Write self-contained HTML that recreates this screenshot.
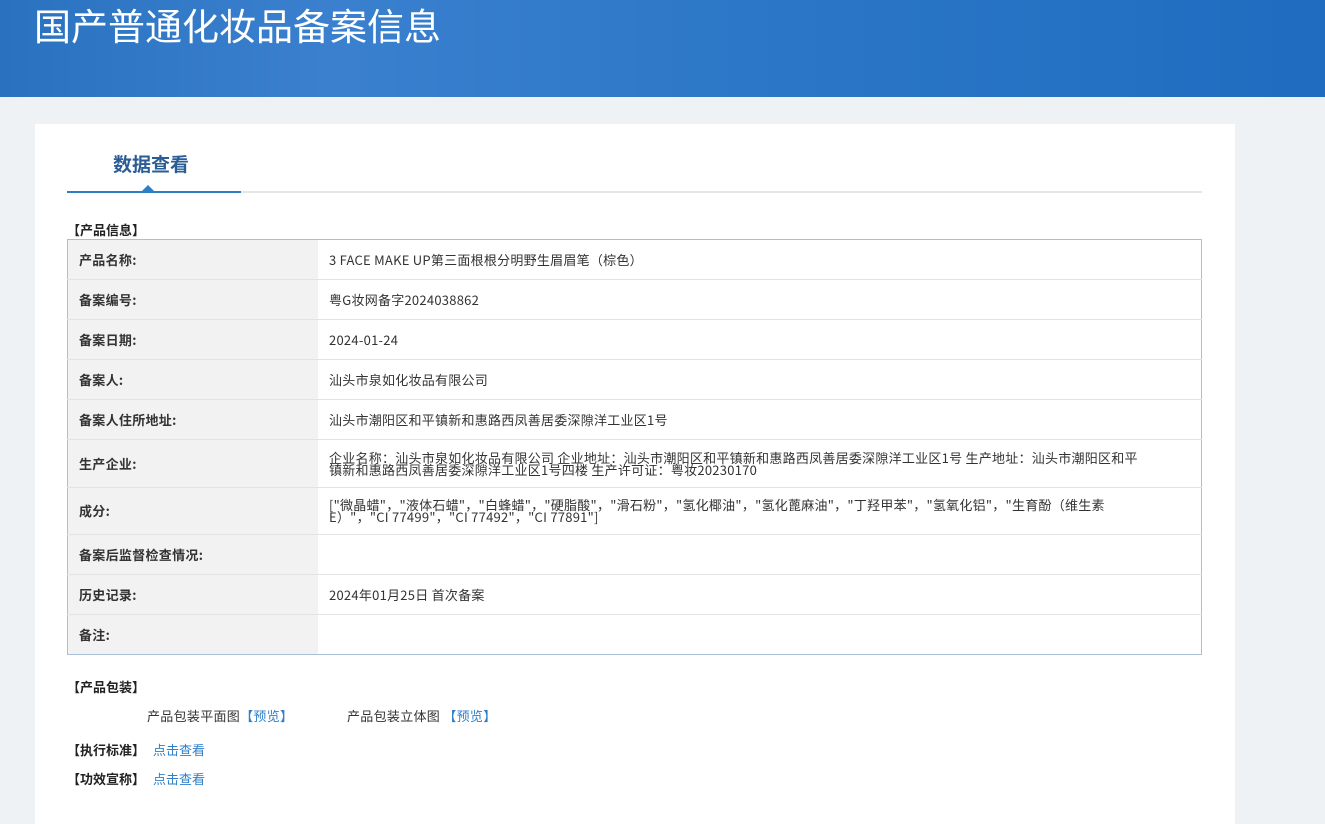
<!DOCTYPE html>
<html><head><meta charset="utf-8"><style>
body{margin:0;width:1325px;height:813px;overflow:hidden;background:#eef2f5;font-family:"Liberation Sans","Microsoft YaHei","Noto Sans CJK SC",sans-serif;color:#333;position:relative}
.hd{position:absolute;left:0;top:0;width:1325px;height:97px;background:linear-gradient(90deg,#2a72c0 0%,#3a80cf 25%,#2b76c6 60%,#1f6cc0 100%)}
.hd h1{position:absolute;left:34px;top:2px;margin:0;font-size:37px;font-weight:normal;color:#fff;line-height:44px;font-family:"Noto Sans CJK SC",sans-serif}
.card{position:absolute;left:35px;top:124px;width:1200px;height:700px;background:#fff}
.tab{position:absolute;left:113px;top:150px;font-size:19px;font-weight:bold;color:#2a5d96;font-family:"Noto Sans CJK SC",sans-serif}
.line{position:absolute;left:67px;top:191px;width:1135px;height:2px;background:#e6e6e6}
.line2{position:absolute;left:67px;top:191px;width:174px;height:2px;background:#2f7fc8}
.tri{position:absolute;left:142px;top:185px;width:0;height:0;border-left:6px solid transparent;border-right:6px solid transparent;border-bottom:6px solid #2f7fc8}
.sec{position:absolute;left:67px;font-size:13px;font-weight:bold;color:#222;font-family:"Noto Sans CJK SC",sans-serif}
table{position:absolute;left:67px;top:239px;width:1135px;border-collapse:collapse;border:1px solid #aabfd8;font-size:13px;font-family:"Noto Sans CJK SC",sans-serif}
td{border-bottom:1px solid #e3e3e3;padding:0 11px;height:39px;line-height:12px}
td.l{width:228px;background:#f2f2f2;font-weight:bold;color:#333;letter-spacing:0.3px}
td.v{color:#333;letter-spacing:0.25px}
.a{color:#2f7fc8}
.t{position:absolute;font-size:13px;font-family:"Noto Sans CJK SC",sans-serif;letter-spacing:0.3px}
</style></head><body>
<div class="hd"><h1>国产普通化妆品备案信息</h1></div>
<div class="card"></div>
<div class="tab">数据查看</div>
<div class="line"></div><div class="line2"></div><div class="tri"></div>
<div class="sec" style="top:220px">【产品信息】</div>
<table>
<tr><td class="l">产品名称:</td><td class="v">3 FACE MAKE UP第三面根根分明野生眉眉笔（棕色）</td></tr>
<tr><td class="l">备案编号:</td><td class="v">粤G妆网备字2024038862</td></tr>
<tr><td class="l">备案日期:</td><td class="v">2024-01-24</td></tr>
<tr><td class="l">备案人:</td><td class="v">汕头市泉如化妆品有限公司</td></tr>
<tr><td class="l">备案人住所地址:</td><td class="v">汕头市潮阳区和平镇新和惠路西凤善居委深隙洋工业区1号</td></tr>
<tr><td class="l" style="height:47px">生产企业:</td><td class="v">企业名称：汕头市泉如化妆品有限公司 企业地址：汕头市潮阳区和平镇新和惠路西凤善居委深隙洋工业区1号 生产地址：汕头市潮阳区和平<br>镇新和惠路西凤善居委深隙洋工业区1号四楼 生产许可证：粤妆20230170</td></tr>
<tr><td class="l" style="height:46px">成分:</td><td class="v">["微晶蜡"，"液体石蜡"，"白蜂蜡"，"硬脂酸"，"滑石粉"，"氢化椰油"，"氢化蓖麻油"，"丁羟甲苯"，"氢氧化铝"，"生育酚（维生素<br>E）"，"CI 77499"，"CI 77492"，"CI 77891"]</td></tr>
<tr><td class="l">备案后监督检查情况:</td><td class="v"></td></tr>
<tr><td class="l">历史记录:</td><td class="v">2024年01月25日 首次备案</td></tr>
<tr><td class="l" style="border-bottom:none">备注:</td><td class="v" style="border-bottom:none"></td></tr>
</table>
<div class="sec" style="top:677px">【产品包装】</div>
<div class="t" style="left:147px;top:706px">产品包装平面图<span class="a">【预览】</span></div>
<div class="t" style="left:347px;top:706px">产品包装立体图 <span class="a">【预览】</span></div>
<div class="sec" style="top:740px">【执行标准】<span class="a" style="font-weight:normal;margin-left:8px">点击查看</span></div>
<div class="sec" style="top:769px">【功效宣称】<span class="a" style="font-weight:normal;margin-left:8px">点击查看</span></div>
</body></html>
